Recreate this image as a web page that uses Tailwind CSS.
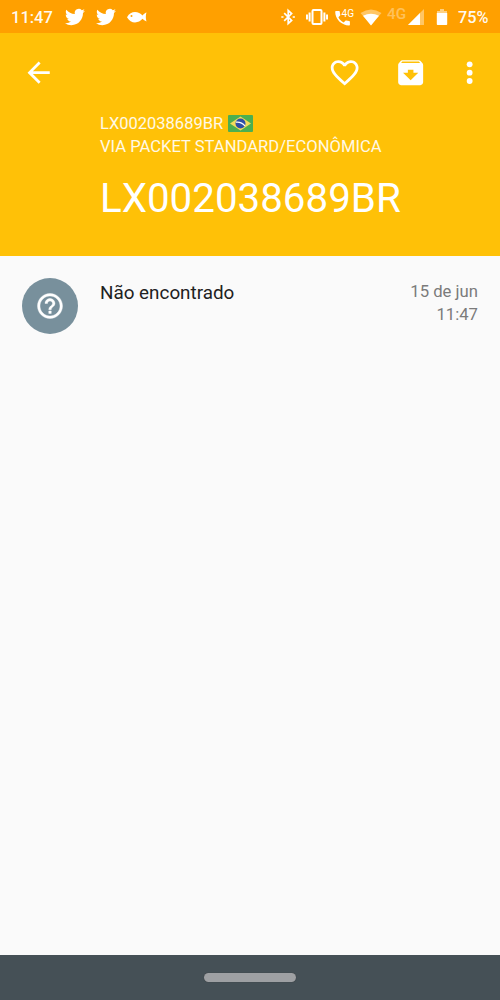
<!DOCTYPE html>
<html lang="pt-BR">
<head>
<meta charset="utf-8">
<title>LX002038689BR</title>
<script src="https://cdn.jsdelivr.net/npm/@tailwindcss/browser@4"></script>
</head>
<body class="flex h-[1000px] w-[500px] flex-col overflow-hidden bg-[#fafafa] font-['Roboto',sans-serif]">
<!-- Status bar -->
<div class="flex h-[33px] shrink-0 items-center bg-[#ffa000] pl-[11px] text-[16.5px] font-medium text-white/95">
  <span class="w-[54px] pt-[3px] leading-none">11:47</span>
  <svg class="mr-[11px] h-5 w-5" viewBox="0 0 24 24" fill="#fff"><path id="bird" d="M23.95 4.57a10 10 0 0 1-2.82.77 4.96 4.96 0 0 0 2.16-2.72c-.95.55-2 .96-3.13 1.18a4.92 4.92 0 0 0-8.38 4.48C7.69 8.09 4.07 6.13 1.64 3.16a4.82 4.82 0 0 0-.67 2.48c0 1.71.87 3.21 2.19 4.1a4.9 4.9 0 0 1-2.23-.62v.06a4.92 4.92 0 0 0 3.95 4.83 5 5 0 0 1-2.21.08 4.94 4.94 0 0 0 4.6 3.42A9.87 9.87 0 0 1 0 19.54a13.99 13.99 0 0 0 7.56 2.21c9.05 0 14-7.5 14-13.98 0-.21 0-.42-.02-.63a9.94 9.94 0 0 0 2.41-2.57z"/></svg>
  <svg class="mr-[11px] h-5 w-5" viewBox="0 0 24 24" fill="#fff"><use href="#bird"/></svg>
  <svg class="h-[12px] w-5" viewBox="0 0 20 12"><path fill="#fff" d="M0 6.2C2 2.500 5 1 8 1c3 0 5.500 1.300 7.500 3.500C17 3 18.500 1.800 19.500 1.600 18.600 4 18.600 8 19.500 10.400 18.500 10.200 17 9.200 15.500 7.800 13.500 10 11 11.400 8 11.400 5 11.400 2 9.800 0 6.200z"/><circle cx="4.500" cy="5" r="1" fill="#ffa000"/></svg>
  <!-- System indicators -->
  <svg class="ml-[132px] h-[18px] w-[18px]" viewBox="0 0 18 18" fill="none" stroke="#fff" stroke-width="1.700"><path d="M5.200 5.200l7.400 7.300L9.200 15.500V2.500l3.400 3-7.400 7.300"/><path d="M2.300 9h2.200M13.700 9h2.200"/></svg>
  <svg class="ml-[9px] h-[18px] w-[22px]" viewBox="0 0 22 18" fill="none" stroke="#fff" stroke-width="2"><rect x="6.500" y="2" width="9" height="14" rx="1"/><path d="M3.600 4.500v9M.95 6.500v5M18.400 4.500v9M21.050 6.500v5"/></svg>
  <svg class="ml-[6px] h-[20px] w-[22px]" viewBox="0 0 22 20" fill="#fff"><path d="M2 4h3c.5 0 .8.300.8.800 0 1 .2 2 .5 2.900.1.300 0 .6-.2.800L4.400 10.200c1.200 2.400 2.900 4.100 5.300 5.300l1.700-1.800c.2-.2.500-.3.800-.2.900.3 1.900.5 2.900.5.500 0 .8.300.8.800v2.900c0 .5-.3.800-.8.800C7.500 18.500 1.200 12.200 1.200 4.800c0-.5.300-.8.800-.8z"/><text x="7.500" y="9.800" font-size="11" font-weight="400" textLength="12.500" lengthAdjust="spacingAndGlyphs">4G</text></svg>
  <svg class="ml-[4px] h-[18px] w-[22px]" viewBox="0 0 22 18" fill="#fff"><path opacity=".4" d="M.5 5Q11-2 21.500 5L11 17z"/><path d="M3 7.800Q11 3.500 19 7.800L11 17.500z"/></svg>
  <svg class="ml-[5px] h-[20px] w-[38px]" viewBox="0 0 38 20" fill="#fff"><text x="0" y="12" font-size="14" textLength="19" lengthAdjust="spacingAndGlyphs" opacity=".35">4G</text><path opacity=".4" d="M37 2v16H21z"/><path d="M33 6v12H21z"/></svg>
  <svg class="ml-[11px] h-[18px] w-[12px]" viewBox="0 0 12 18" fill="#fff"><path opacity=".5" d="M4 1h4v2h3v3H1V3h3z"/><path d="M.8 5h10.400v11.200q0 .8-.8.800H1.600q-.8 0-.8-.8z"/></svg>
  <span class="ml-[10px] pt-[3px] text-[16.300px] leading-none">75%</span>
</div>
<!-- App bar -->
<header class="h-[223px] shrink-0 bg-[#ffc107] text-white">
  <div class="flex h-[79px] items-center pl-[22px] pr-[14px]">
    <svg class="h-[33.300px] w-[33.300px]" viewBox="0 0 24 24" fill="#fff"><path d="M20 11H7.830l5.590-5.590L12 4l-8 8 8 8 1.410-1.410L7.830 13H20v-2z"/></svg>
    <svg class="ml-auto h-[33.300px] w-[33.300px]" viewBox="0 0 24 24" fill="#fff"><path d="M16.500 3c-1.740 0-3.410.81-4.500 2.090C10.910 3.810 9.240 3 7.500 3 4.420 3 2 5.420 2 8.500c0 3.780 3.400 6.860 8.550 11.540L12 21.350l1.450-1.320C18.600 15.360 22 12.280 22 8.500 22 5.420 19.580 3 16.500 3zm-4.400 15.550l-.1.100-.1-.1C7.140 14.240 4 11.390 4 8.500 4 6.500 5.500 5 7.500 5c1.540 0 3.040.99 3.570 2.360h1.870C13.460 5.990 14.960 5 16.500 5c2 0 3.500 1.500 3.500 3.500 0 2.890-3.140 5.740-7.900 10.050z"/></svg>
    <svg class="ml-[33px] h-[33.300px] w-[33.300px]" viewBox="0 0 24 24" fill="#fff"><path d="M20.540 5.230l-1.390-1.680C18.880 3.210 18.470 3 18 3H6c-.47 0-.88.210-1.160.55L3.460 5.230C3.170 5.570 3 6.020 3 6.500V19c0 1.100.9 2 2 2h14c1.100 0 2-.9 2-2V6.500c0-.48-.17-.93-.46-1.270zM12 17.500L6.500 12H10v-2h4v2h3.500L12 17.500zM5.120 5l.81-1h12l.94 1H5.120z"/></svg>
    <svg class="ml-[25px] h-[33.300px] w-[33.300px]" viewBox="0 0 24 24" fill="#fff"><circle cx="12" cy="6" r="2.100"/><circle cx="12" cy="12" r="2.100"/><circle cx="12" cy="18" r="2.100"/></svg>
  </div>
  <div class="pl-[100px] text-[16.600px] leading-[23px]">
    <div class="flex items-center text-white/90"><span class="text-[16.500px]">LX002038689BR</span>
      <svg class="ml-[5px] h-[17px] w-[25px]" viewBox="0 0 25 17"><rect width="25" height="17" rx="1" fill="#4caf50"/><path d="M2 8.500L12.500 1.500 23 8.500 12.500 15.500z" fill="#f4dc5c"/><circle cx="12.500" cy="8.500" r="5" fill="#2f4fa5"/><path d="M7.900 7.200q5.500-.7 9 3.700" fill="none" stroke="#fff" stroke-width="1.300"/></svg>
    </div>
    <div class="text-white/90">VIA PACKET STANDARD/ECONÔMICA</div>
  </div>
  <h1 class="mt-[17px] pl-[100px] text-[40.300px] leading-[48px]">LX002038689BR</h1>
</header>
<!-- Tracking events -->
<main class="flex-1 px-[22px] pt-[22px]">
  <div class="flex items-start">
    <div class="flex h-14 w-14 items-center justify-center rounded-full bg-[#78909c]">
      <svg class="h-[30px] w-[30px]" viewBox="0 0 24 24" fill="#fff" stroke="#fff" stroke-width=".3"><path d="M11 18h2v-2h-2v2zm1-16C6.480 2 2 6.480 2 12s4.480 10 10 10 10-4.480 10-10S17.520 2 12 2zm0 18c-4.410 0-8-3.590-8-8s3.590-8 8-8 8 3.590 8 8-3.590 8-8 8zm0-14c-2.210 0-4 1.790-4 4h2c0-1.100.9-2 2-2s2 .9 2 2c0 2-3 1.750-3 5h2c0-2.250 3-2.500 3-5 0-2.210-1.790-4-4-4z"/></svg>
    </div>
    <div class="ml-[22px] pt-[2px] text-[18.850px] leading-[26px] text-[#212121]">Não encontrado</div>
    <div class="ml-auto pt-[2px] text-right text-[16.700px] leading-[23px] text-[#7b7b7b]">15 de jun<br>11:47</div>
  </div>
</main>
<!-- Navigation bar -->
<footer class="flex h-[45px] shrink-0 items-center justify-center bg-[#455056]">
  <div class="h-[9px] w-[92px] rounded-full bg-[#9ea0a3] shadow-[0_0_1px_#333]"></div>
</footer>
</body>
</html>
